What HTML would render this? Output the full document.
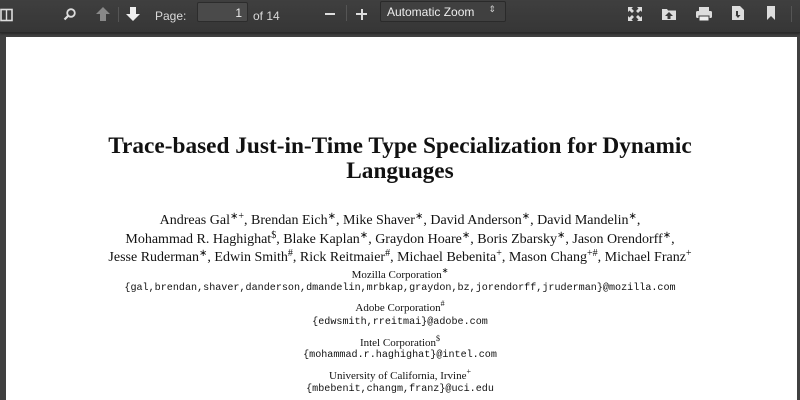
<!DOCTYPE html>
<html><head><style>
html,body{margin:0;width:800px;height:400px;overflow:hidden}
body{background:#404040;font-family:"Liberation Sans",sans-serif;position:relative}
.tb{position:absolute;left:0;top:0;width:800px;height:32px;background:linear-gradient(#3f3f3f,#363636);border-bottom:1px solid #2a2a2a;box-shadow:0 1px 2px rgba(0,0,0,.4)}
.t{position:absolute;color:#d9d9d9;font-size:12px;top:9px}
.page{position:absolute;left:6px;top:37px;width:791px;height:363px;background:#fff}
.c{position:absolute;left:0;width:800px;text-align:center;font-family:"Liberation Serif",serif;color:#111;white-space:nowrap}
.m{font-family:"Liberation Mono",monospace;font-size:10.1px}
sup{font-size:10px;vertical-align:5px;line-height:0}
svg{position:absolute}
</style></head><body>
<div class="tb">
<svg style="left:0;top:8px" width="14" height="14"><rect x="1" y="1.5" width="11" height="11" fill="none" stroke="#ddd" stroke-width="1.6"/><line x1="6.5" y1="2" x2="6.5" y2="12" stroke="#ddd" stroke-width="1.4"/></svg>
<svg style="left:63px;top:7px" width="14" height="14"><circle cx="8" cy="6" r="3.8" fill="none" stroke="#ddd" stroke-width="1.8"/><line x1="5" y1="9" x2="1.5" y2="12.5" stroke="#ddd" stroke-width="2.2"/></svg>
<svg style="left:95px;top:6px" width="16" height="16"><path d="M8 1L15 8H11V15H5V8H1Z" fill="#888"/></svg>
<div style="position:absolute;left:118px;top:7px;width:1px;height:15px;background:#555"></div>
<svg style="left:125px;top:6px" width="16" height="16"><path d="M8 15L15 8H11V1H5V8H1Z" fill="#eee"/></svg>
<div class="t" style="left:155px">Page:</div>
<div style="position:absolute;left:197px;top:2px;width:51px;height:20px;background:#4a4a4a;border:1px solid #2c2c2c;border-radius:2px;color:#eee;font-size:12px;text-align:right;box-sizing:border-box;padding:3px 5px">1</div>
<div class="t" style="left:253px">of 14</div>
<div style="position:absolute;left:325px;top:13px;width:10px;height:2px;background:#ddd"></div>
<div style="position:absolute;left:346px;top:5px;width:1px;height:16px;background:#555"></div>
<div style="position:absolute;left:356px;top:13px;width:11px;height:2px;background:#ddd"></div>
<div style="position:absolute;left:360.5px;top:8.5px;width:2px;height:11px;background:#ddd"></div>
<div style="position:absolute;left:380px;top:1px;width:126px;height:21px;background:#404040;border:1px solid #2a2a2a;border-radius:2px;box-sizing:border-box;color:#eee;font-size:12px;padding:3px 6px">Automatic Zoom<span style="position:absolute;right:9px;top:2px;font-size:9px;color:#ccc">&#8661;</span></div>
<svg style="left:627px;top:6px" width="16" height="16" fill="#ddd"><path d="M1 1H6L4.5 2.5L7 5L5 7L2.5 4.5L1 6Z M15 1H10L11.5 2.5L9 5L11 7L13.5 4.5L15 6Z M1 15H6L4.5 13.5L7 11L5 9L2.5 11.5L1 10Z M15 15H10L11.5 13.5L9 11L11 9L13.5 11.5L15 10Z"/></svg>
<svg style="left:661px;top:6px" width="16" height="16" fill="#ddd"><path d="M1 3H6L7 4.5H15V14H1Z"/><path d="M8 6L12 10H9.5V13H6.5V10H4Z" fill="#3a3a3a"/></svg>
<svg style="left:695px;top:6px" width="18" height="16" fill="#ddd"><rect x="4" y="1" width="10" height="4"/><rect x="1" y="5" width="16" height="7" rx="1.5"/><rect x="4" y="10" width="10" height="5" fill="#eee" stroke="#3a3a3a"/></svg>
<svg style="left:731px;top:5px" width="14" height="16" fill="#ddd"><path d="M1 1H9L13 5V15H1Z"/><path d="M7 6V10H9.5L7 13L4.5 10H5V6Z" fill="#3a3a3a"/></svg>
<svg style="left:766px;top:5px" width="10" height="16" fill="#ddd"><path d="M1 1H9V15L5 11L1 15Z"/></svg>
<div style="position:absolute;left:791px;top:6px;width:1px;height:16px;background:#555"></div>
</div>
<div class="page"></div>
<div class="c" style="top:134px;font-size:23.3px;font-weight:bold;line-height:25px">Trace-based Just-in-Time Type Specialization for Dynamic<br>Languages</div>
<div class="c" style="top:212px;font-size:14px;line-height:18.5px">Andreas Gal<sup>∗+</sup>, Brendan Eich<sup>∗</sup>, Mike Shaver<sup>∗</sup>, David Anderson<sup>∗</sup>, David Mandelin<sup>∗</sup>,<br>Mohammad R. Haghighat<sup>$</sup>, Blake Kaplan<sup>∗</sup>, Graydon Hoare<sup>∗</sup>, Boris Zbarsky<sup>∗</sup>, Jason Orendorff<sup>∗</sup>,<br>Jesse Ruderman<sup>∗</sup>, Edwin Smith<sup>#</sup>, Rick Reitmaier<sup>#</sup>, Michael Bebenita<sup>+</sup>, Mason Chang<sup>+#</sup>, Michael Franz<sup>+</sup></div>
<div class="c" style="top:269px;font-size:11px">Mozilla Corporation<sup style="font-size:8px">∗</sup></div>
<div class="c m" style="top:283px">{gal,brendan,shaver,danderson,dmandelin,mrbkap,graydon,bz,jorendorff,jruderman}@mozilla.com</div>
<div class="c" style="top:302px;font-size:11px">Adobe Corporation<sup style="font-size:8px">#</sup></div>
<div class="c m" style="top:317px">{edwsmith,rreitmai}@adobe.com</div>
<div class="c" style="top:337px;font-size:11px">Intel Corporation<sup style="font-size:8px">$</sup></div>
<div class="c m" style="top:350px">{mohammad.r.haghighat}@intel.com</div>
<div class="c" style="top:370px;font-size:11px">University of California, Irvine<sup style="font-size:8px">+</sup></div>
<div class="c m" style="top:384px">{mbebenit,changm,franz}@uci.edu</div>
</body></html>
